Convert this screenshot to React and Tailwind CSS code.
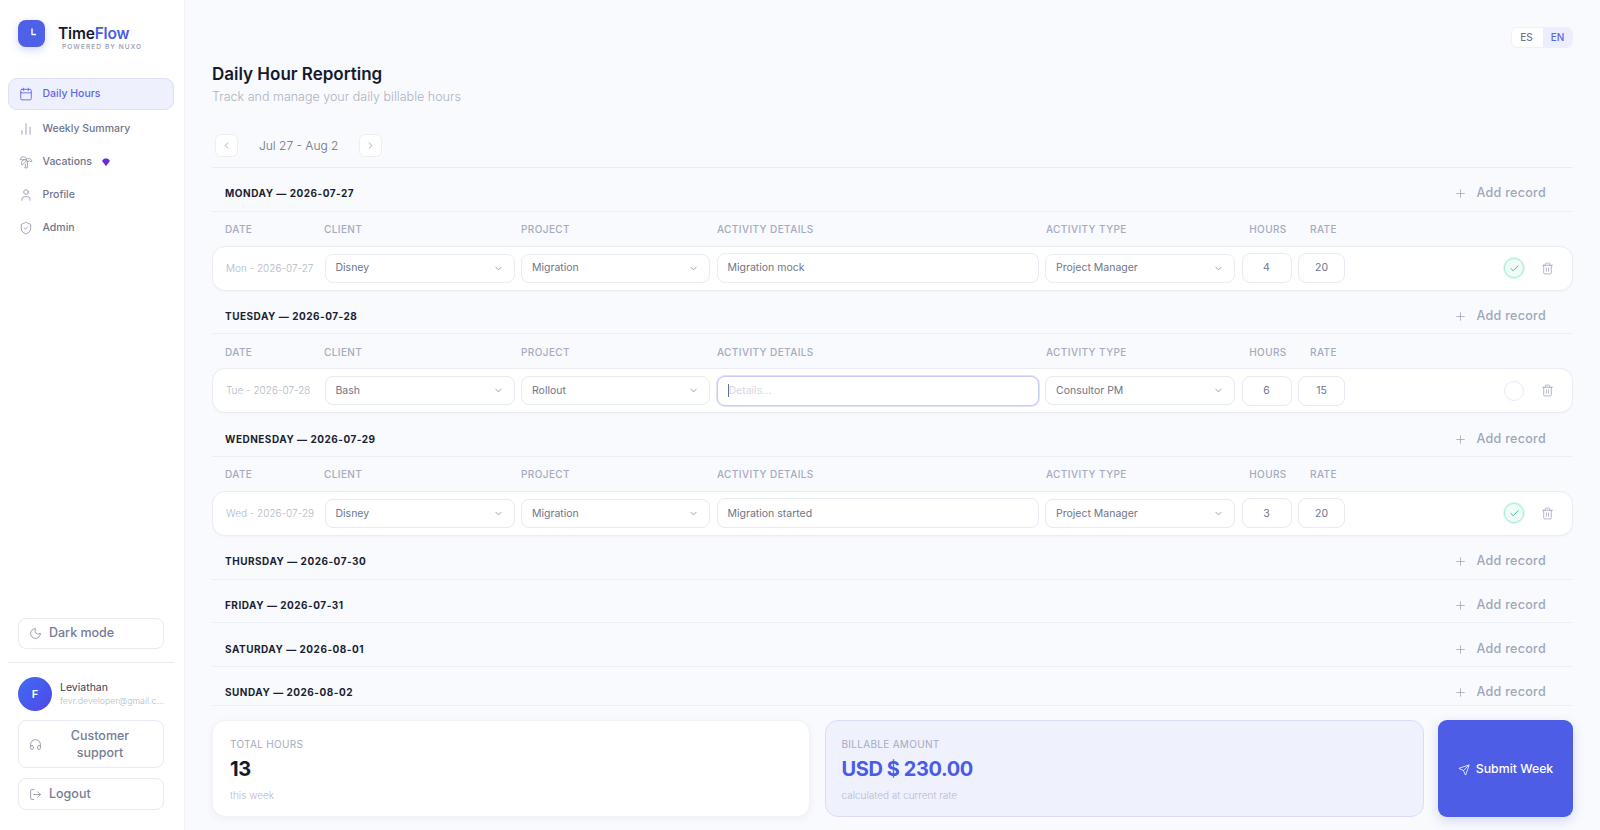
import React from "react";
import {
  Calendar,
  ChartNoAxesColumn,
  TreePalm,
  User,
  ShieldCheck,
  Gem,
  Moon,
  Headphones,
  LogOut,
  Plus,
  Send,
  Trash2,
  Check,
  ChevronDown,
  ChevronLeft,
  ChevronRight,
} from "lucide-react";

const GRID = "grid grid-cols-[92px_190px_189px_322px_190px_50px_47px_1fr] pl-[13px] pr-[13px]";

const days = [
  {
    title: "MONDAY — 2026-07-27",
    record: { date: "Mon - 2026-07-27", client: "Disney", project: "Migration", details: "Migration mock", type: "Project Manager", hours: "4", rate: "20", done: true },
  },
  {
    title: "TUESDAY — 2026-07-28",
    record: { date: "Tue - 2026-07-28", client: "Bash", project: "Rollout", details: "", type: "Consultor PM", hours: "6", rate: "15", done: false },
  },
  {
    title: "WEDNESDAY — 2026-07-29",
    record: { date: "Wed - 2026-07-29", client: "Disney", project: "Migration", details: "Migration started", type: "Project Manager", hours: "3", rate: "20", done: true },
  },
  { title: "THURSDAY — 2026-07-30" },
  { title: "FRIDAY — 2026-07-31" },
  { title: "SATURDAY — 2026-08-01" },
  { title: "SUNDAY — 2026-08-02" },
];

function NavItem({ icon: Icon, label, active, children }) {
  return (
    <div
      className={
        active
          ? "flex items-center h-[32px] mb-[2px] pl-[10px] gap-[9.5px] rounded-[9px] border border-[#dcdffa] bg-[#eef0fe] text-[#5c67e8]"
          : "flex items-center h-[33px] pl-[11px] gap-[9.5px] text-[#6f768e]"
      }
    >
      <Icon size={14} strokeWidth={1.5} className={active ? "text-[#5c67e8]" : "text-[#9298ab]"} />
      <span className="text-[10.5px] font-medium">{label}</span>
      {children}
    </div>
  );
}

function SideButton({ icon: Icon, children, className }) {
  return (
    <div className={"flex items-center ml-[18px] mr-[20px] pl-[10px] pr-[12px] gap-[7px] rounded-[8px] border border-[#e8ebf2] bg-white text-[12.5px] font-medium text-[#767c96] " + className}>
      <Icon size={13} strokeWidth={1.6} className="shrink-0 text-[#8c91a5]" />
      {children}
    </div>
  );
}

function Sidebar() {
  return (
    <aside className="w-[185px] shrink-0 h-full flex flex-col bg-white border-r border-[#eff1f6] px-0">
      <div className="flex items-start pl-[18px] pt-[20px] h-[78px]">
        <div className="w-[27px] h-[27px] rounded-[8px] bg-[#4f60e8] shadow-[0_3px_8px_rgba(79,96,232,0.25)] flex items-center justify-center">
          <svg width="14" height="14" viewBox="0 0 14 14" fill="none" stroke="white" strokeWidth="1.4" strokeLinecap="round" strokeLinejoin="round">
            <path d="M7 2V7.5H10.5" />
          </svg>
        </div>
        <div className="ml-[13px] mt-[5px] relative">
          <div className="text-[15.5px] leading-[18px] font-semibold tracking-[-0.2px] text-[#141a2e]">
            Time<span className="text-[#4a5ce8]">Flow</span>
          </div>
          <div className="ml-[4px] text-[6.5px] leading-[8px] font-medium tracking-[1.1px] text-[#9297ac] whitespace-nowrap">POWERED BY NUXO</div>
        </div>
      </div>
      <nav className="pl-[8px] pr-[10px] flex flex-col">
        <NavItem icon={Calendar} label="Daily Hours" active />
        <NavItem icon={ChartNoAxesColumn} label="Weekly Summary" />
        <NavItem icon={TreePalm} label="Vacations">
          <Gem size={8} strokeWidth={2} className="text-[#6d28d9] fill-[#6d28d9]" />
        </NavItem>
        <NavItem icon={User} label="Profile" />
        <NavItem icon={ShieldCheck} label="Admin" />
      </nav>
      <div className="mt-auto pb-[20px] flex flex-col">
        <SideButton icon={Moon} className="h-[31px]">Dark mode</SideButton>
        <div className="ml-[8px] mr-[10px] mt-[13px] border-t border-[#e8ebf2]" />
        <div className="flex items-center mx-[18px] mt-[14px] gap-[8px]">
          <div className="w-[34px] h-[34px] shrink-0 rounded-full bg-gradient-to-br from-[#3c6cf5] to-[#4f46e5] text-white text-[11px] font-semibold flex items-center justify-center">F</div>
          <div className="min-w-0">
            <div className="text-[10.5px] leading-[14px] text-[#3a4058]">Leviathan</div>
            <div className="text-[8.8px] leading-[12px] font-light text-[#b7bbc9] whitespace-nowrap">fevr.developer@gmail.c...</div>
          </div>
        </div>
        <SideButton icon={Headphones} className="h-[48px] mt-[9px]">
          <span className="flex-1 text-center leading-[17px]">Customer support</span>
        </SideButton>
        <SideButton icon={LogOut} className="h-[32px] mt-[10px]">Logout</SideButton>
      </div>
    </aside>
  );
}

function Select({ value }) {
  return (
    <div className="h-[29px] flex items-center justify-between pl-[10px] pr-[10px] rounded-[8px] border border-[#e8ebf2] bg-white text-[10.5px] text-[#70758a]">
      <span>{value}</span>
      <ChevronDown size={11} strokeWidth={1.6} className="text-[#7d8398]" />
    </div>
  );
}

function Cell({ children, focused, center }) {
  const border = focused
    ? "border-[#c9ccf6] shadow-[0_0_0_1px_#dfe1fa]"
    : "border-[#e8ebf2]";
  return (
    <div className={"h-[30px] flex items-center rounded-[8px] border bg-white text-[10.5px] text-[#70758a] " + border + (center ? " justify-center" : " px-[10px]")}>
      {children}
    </div>
  );
}

function RecordRow({ record }) {
  return (
    <div>
      <div className={GRID + " gap-x-[7px] h-[34px] pt-[2px] items-center text-[10px] font-medium tracking-[0.4px] text-[#a5abc0]"}>
        <span>DATE</span>
        <span>CLIENT</span>
        <span>PROJECT</span>
        <span>ACTIVITY DETAILS</span>
        <span>ACTIVITY TYPE</span>
        <span className="text-center">HOURS</span>
        <span className="text-center">RATE</span>
      </div>
      <div className={GRID + " gap-x-[6.5px] h-[45px] items-center rounded-[13px] border border-[#e9ecf3] bg-white shadow-[0_1px_3px_rgba(30,40,80,0.03)]"}>
        <span className="text-[10px] font-light text-[#b3b8c7] whitespace-nowrap">{record.date}</span>
        <Select value={record.client} />
        <Select value={record.project} />
        {record.details ? (
          <Cell>{record.details}</Cell>
        ) : (
          <Cell focused>
            <span className="w-[1px] h-[13px] bg-[#6a7085]" />
            <span className="text-[#d5d8e2]">Details...</span>
          </Cell>
        )}
        <Select value={record.type} />
        <Cell center>{record.hours}</Cell>
        <Cell center>{record.rate}</Cell>
        <div className="flex items-center justify-end">
          {record.done ? (
            <div className="w-[20px] h-[20px] rounded-full border border-[#a5ecd8] bg-[#effcf8] shadow-[0_0_0_1px_#dffaf1] flex items-center justify-center">
              <Check size={11} strokeWidth={1.8} className="text-[#22b38f]" />
            </div>
          ) : (
            <div className="w-[20px] h-[20px] rounded-full border border-[#e8ebf2] bg-white" />
          )}
          <div className="w-[24px] ml-[11px] flex justify-center">
            <Trash2 size={13} strokeWidth={1.4} className="text-[#9ba1b6]" />
          </div>
        </div>
      </div>
    </div>
  );
}

function Day({ day }) {
  return (
    <section>
      <div className="h-[43.67px] pt-[9px] flex items-center justify-between pl-[13px] pr-[27px] border-b border-[#eceef4]">
        <span className="text-[10px] font-bold tracking-[0.5px] text-[#1a1f33]">{day.title}</span>
        <span className="flex items-center gap-[9px] text-[12.5px] font-medium tracking-[0.3px] text-[#a0a6bc]">
          <Plus size={13} strokeWidth={1.5} />
          Add record
        </span>
      </div>
      {day.record && <RecordRow record={day.record} />}
    </section>
  );
}

function SummaryCard({ label, value, note, tint }) {
  return (
    <div className={tint
      ? "h-[97px] flex flex-col pl-[16px] pt-[15px] rounded-[13px] border border-[#d9dcf9] bg-[#eff1fd]"
      : "h-[97px] flex flex-col pl-[17px] pt-[15px] rounded-[13px] border border-[#f0f2f6] bg-white shadow-[0_2px_8px_rgba(30,40,80,0.05)]"}>
      <span className="text-[10px] leading-[16px] tracking-[0.3px] text-[#a5abc0]">{label}</span>
      <span className={"text-[20px] leading-[35px] font-bold tracking-[-0.4px] " + (tint ? "text-[#4a5be6]" : "text-[#141a2e]")}>{value}</span>
      <span className="text-[10px] leading-[16px] font-light text-[#b7bbc9]">{note}</span>
    </div>
  );
}

export default function App() {
  return (
    <div className="flex h-screen overflow-hidden bg-[#f8fafd] [font-family:Inter,sans-serif]">
      <Sidebar />
      <main className="flex-1 min-w-0 flex flex-col px-[27px]">
        <div className="flex justify-end pt-[27px]">
          <div className="flex h-[21px] rounded-[6px] overflow-hidden border border-[#eef0f5] bg-white text-[10px] font-medium">
            <span className="w-[31px] flex items-center justify-center pr-[2px] text-[#6f768e]">ES</span>
            <span className="w-[29px] flex items-center justify-center bg-[#eceefd] text-[#5c67e8]">EN</span>
          </div>
        </div>
        <h1 className="mt-[15px] text-[17px] leading-[22px] font-semibold text-[#141a2e]">Daily Hour Reporting</h1>
        <p className="mt-[2px] text-[12.5px] leading-[20px] font-light text-[#aeb3c3]">Track and manage your daily billable hours</p>
        <div className="mt-[27px] pb-[10px] pl-[3px] flex items-center border-b border-[#e9ecf2]">
          <button className="w-[23px] h-[23px] rounded-[6px] border border-[#eceef4] bg-white flex items-center justify-center text-[#8c91a5]">
            <ChevronLeft size={11} strokeWidth={1.6} />
          </button>
          <span className="w-[121px] pl-[21px] text-[12px] text-[#6a7085] font-light">Jul 27 - Aug 2</span>
          <button className="w-[23px] h-[23px] rounded-[6px] border border-[#eceef4] bg-white flex items-center justify-center text-[#8c91a5]">
            <ChevronRight size={11} strokeWidth={1.6} />
          </button>
        </div>
        <div className="flex-1 min-h-0 overflow-hidden border-b border-[#eceef4]">
          {days.map((d) => (
            <Day key={d.title} day={d} />
          ))}
        </div>
        <div className="grid grid-cols-[598px_599px_135px] gap-x-[14.5px] pt-[14px] pb-[13px]">
          <SummaryCard label="TOTAL HOURS" value="13" note="this week" />
          <SummaryCard tint label="BILLABLE AMOUNT" value="USD $ 230.00" note="calculated at current rate" />
          <button className="h-[97px] pt-[2px] rounded-[9px] bg-[#4d5de6] text-white text-[12.3px] font-medium shadow-[0_4px_12px_rgba(77,93,230,0.2)] flex items-center justify-center gap-[6px]">
            <Send size={12} strokeWidth={1.6} />
            Submit Week
          </button>
        </div>
      </main>
    </div>
  );
}
